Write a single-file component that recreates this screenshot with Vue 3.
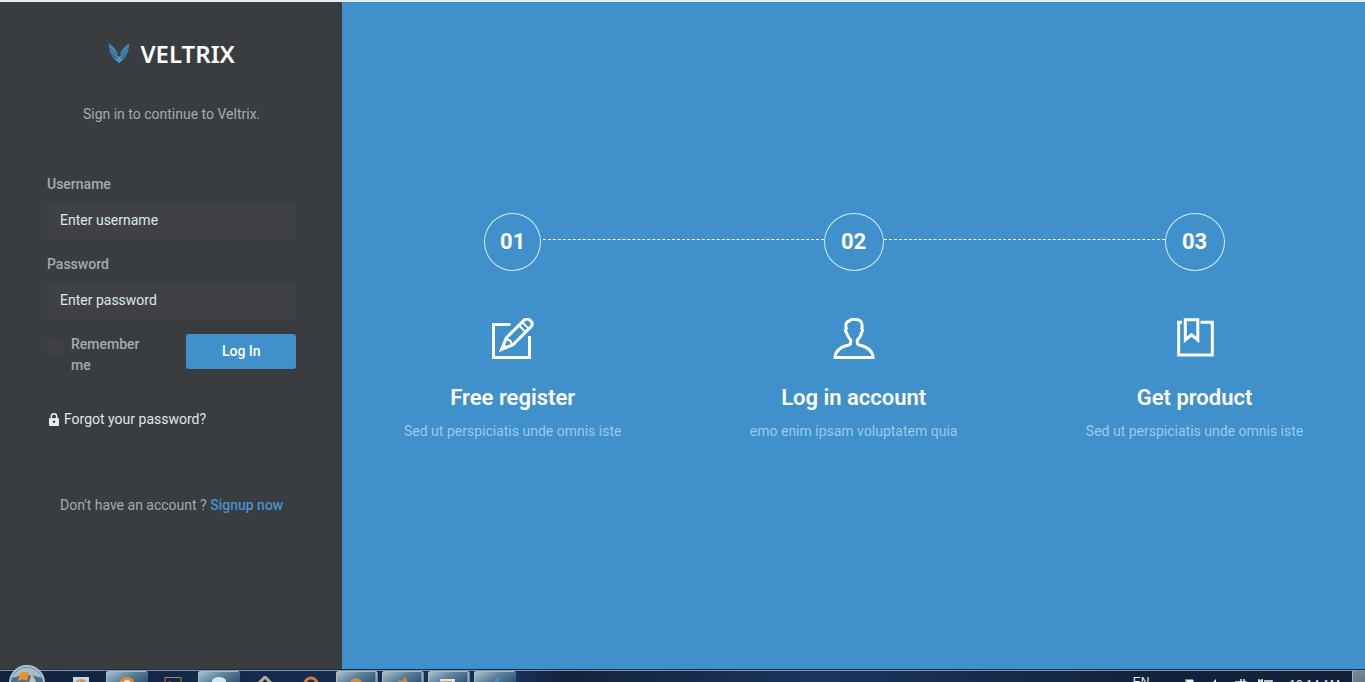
<script setup>
import { ref } from 'vue'

const username = ref('')
const password = ref('')
const remember = ref(false)

const steps = [
  { number: '01', icon: 'pencil', title: 'Free register', text: 'Sed ut perspiciatis unde omnis iste' },
  { number: '02', icon: 'user', title: 'Log in account', text: 'emo enim ipsam voluptatem quia' },
  { number: '03', icon: 'bookmark', title: 'Get product', text: 'Sed ut perspiciatis unde omnis iste' },
]

const tasks = [
  { id: 'media', open: false },
  { id: 'browser', open: true },
  { id: 'editor', open: false },
  { id: 'store', open: true },
  { id: 'tools', open: false },
  { id: 'ring', open: false },
  { id: 'chrome', open: true, stacked: true },
  { id: 'fox', open: true, stacked: true },
  { id: 'folder', open: true, stacked: true },
  { id: 'paint', open: true },
]
</script>

<template>
  <div class="screen">
    <div class="page">
      <aside class="panel">
        <a class="logo" href="#" aria-label="Veltrix">
          <svg width="22" height="22" viewBox="0 0 22 22" aria-hidden="true">
            <path d="M.5 1C5 4 9 8 10 13V20C5 17 1 11 .5 1Z" fill="#3d7fae" />
            <path d="M21.500 1C17 4 13 8 12 13V20C17 17 21 11 21.500 1Z" fill="#3d7fae" />
            <path d="M7.500 17L11 21.500L14.500 17L11 14Z" fill="#4a9bd3" />
            <path d="M1 6L10 14M2.500 10.500L10 17M21 6L12 14M19.500 10.500L12 17" stroke="#3a5263" stroke-width=".8" />
            <path d="M1.500 4L9.500 11.500M2 8.500L9.500 15M20.500 4L12.500 11.500M20 8.500L12.500 15" stroke="#4a9bd3" stroke-width=".8" />
          </svg>
          <span>VELTRIX</span>
        </a>
        <p class="intro">Sign in to continue to Veltrix.</p>

        <form @submit.prevent>
          <div class="field">
            <label for="username">Username</label>
            <input id="username" v-model="username" type="text" placeholder="Enter username" />
          </div>
          <div class="field">
            <label for="password">Password</label>
            <input id="password" v-model="password" type="password" placeholder="Enter password" />
          </div>
          <div class="actions">
            <div class="remember">
              <input id="remember" v-model="remember" type="checkbox" />
              <label for="remember">Remember me</label>
            </div>
            <button class="login" type="submit">Log In</button>
          </div>
          <a class="forgot" href="#">
            <svg width="10" height="13" viewBox="0 0 10 13" aria-hidden="true">
              <path d="M2.300 6V3.500a2.700 2.700 0 0 1 5.400 0V6" fill="none" stroke="#e4eef4" stroke-width="1.500" />
              <rect y="5" width="10" height="8" rx="1" fill="#e4eef4" />
              <circle cx="5" cy="8.800" r="1.200" fill="#3a3d3f" />
            </svg>
            <span>Forgot your password?</span>
          </a>
        </form>

        <p class="signup">Don't have an account ? <a href="#">Signup now</a></p>
      </aside>

      <main class="hero">
        <ol class="steps">
          <li v-for="step in steps" :key="step.number" class="step">
            <span class="number">{{ step.number }}</span>
            <svg class="icon" width="42" height="42" viewBox="0 0 42 42" aria-hidden="true">
              <template v-if="step.icon === 'pencil'">
                <path d="M18.500 6.500H1.500V39.500H37.500V18" />
                <g transform="translate(9.800 31.200) rotate(-45)">
                  <path d="M0 0L11 -4.800H36Q40.500 -4.800 40.500 0T36 4.800H11Z" />
                  <path d="M10.500 -4L12 0L10.500 4M29 -4.800V4.800M33.500 -4.800V4.800" stroke-width="2" />
                  <path d="M0 0L4 -1.500V1.500Z" />
                </g>
              </template>
              <template v-else-if="step.icon === 'user'">
                <path d="M2 39.500H40C39.500 31.500 31.500 28 25.500 26.800Q24.300 26.500 24.300 25V22C26.800 19.500 28.300 17 28.500 14.500Q30.500 12.500 28.800 10.500C30 4.500 27.500 1.500 23 1.500C20 .8 17.500 1.500 16.500 3C12.500 3.500 12.500 7 13.300 10.500Q11.500 12.500 13.500 14.500C14 17 15.500 19.500 17.700 22V25Q17.700 26.500 16.500 26.800C10.500 28 2.500 31.500 2 39.500Z" />
              </template>
              <template v-else>
                <path d="M8 4.300H4.700V37H38.300V4.300H26.500M11.300 1.700H23.800V22L17.500 16.800L11.300 22Z" />
              </template>
            </svg>
            <h2>{{ step.title }}</h2>
            <p>{{ step.text }}</p>
          </li>
        </ol>
      </main>
    </div>

    <footer class="taskbar">
      <button class="start" type="button" aria-label="Start">
        <svg width="36" height="36" viewBox="0 0 36 36" aria-hidden="true">
          <circle cx="18" cy="18" r="17" fill="#4a6f8c" stroke="#a9c3d3" stroke-width="2" />
          <path d="M3 13A16 16 0 0 1 33 13Q18 7 3 13Z" fill="#a8bdca" />
          <path d="M11 8Q16 6 20 8L18 16Q14 13 9 16Z" fill="#ef8e2b" />
          <path d="M22 10Q25 11 27 17L20 18Z" fill="#b9c2b7" />
        </svg>
      </button>
      <div class="tasks">
        <button
          v-for="task in tasks"
          :key="task.id"
          class="task"
          :class="{ open: task.open, stacked: task.stacked }"
          type="button"
          :aria-label="task.id"
        >
          <svg width="20" height="20" viewBox="0 0 20 20" aria-hidden="true">
            <template v-if="task.id === 'media'">
              <rect x="2" y="1" width="16" height="16" fill="#b9dcec" />
              <circle cx="10" cy="9" r="6" fill="#e98c32" />
              <path d="M8 5L13 9L8 13Z" fill="#fff" />
            </template>
            <template v-else-if="task.id === 'browser'">
              <circle cx="10" cy="9" r="8" fill="#e48a32" />
              <path d="M6 9a4 4 0 0 1 8 0H7" fill="none" stroke="#fff" stroke-width="1.500" />
            </template>
            <template v-else-if="task.id === 'editor'">
              <path d="M2 1.500H18V18H2ZM5 6V12M5 6H8V9H5" fill="none" stroke="#b98240" />
            </template>
            <template v-else-if="task.id === 'store'">
              <ellipse cx="10" cy="5" rx="7" ry="4" fill="#d7e8ee" />
              <rect x="4" y="6" width="12" height="12" fill="#89adc2" />
            </template>
            <template v-else-if="task.id === 'tools'">
              <path d="M3 8L10 1L17 8" fill="none" stroke="#b8aa94" stroke-width="3" />
              <path d="M7 6L12 10" stroke="#d27c34" stroke-width="2" />
            </template>
            <template v-else-if="task.id === 'ring'">
              <circle cx="10" cy="8" r="6" fill="none" stroke="#d9792a" stroke-width="3" />
            </template>
            <template v-else-if="task.id === 'chrome'">
              <circle cx="10" cy="8" r="6" fill="#dd8a3b" />
              <circle cx="10" cy="8" r="2" fill="#eadfc9" />
            </template>
            <template v-else-if="task.id === 'fox'">
              <path d="M2 8L8 4L10 5L13 1L17 8L10 17Z" fill="#d98439" />
            </template>
            <template v-else-if="task.id === 'folder'">
              <path d="M2 3H17L16 15H4Z" fill="#ede6da" />
              <path d="M3 5H14V8H4Z" fill="#dc9851" />
            </template>
            <template v-else>
              <path d="M2 12Q4 5 9 7L13 1L15 3L12 8L18 5V17H2Z" fill="#3b93d2" />
            </template>
          </svg>
        </button>
      </div>
      <div class="tray">
        <span class="lang">EN</span>
        <svg width="90" height="12" viewBox="0 0 90 12" aria-hidden="true">
          <path d="M1 1V12M2 2H8V6H11V10H2Z" fill="#eef3f6" stroke="#eef3f6" />
          <path d="M26 6L31 1V12Z" fill="#eef3f6" />
          <path d="M50 4H61V12M52 4V12M56 1V9M59 1V9M54 6H64" fill="none" stroke="#eef3f6" stroke-width="1.500" />
          <path d="M74 1V8M77 1V8M73 3H78M79 3H87V12M79 6V12" fill="none" stroke="#eef3f6" stroke-width="1.500" />
        </svg>
        <time class="clock">12:14 AM</time>
        <button class="desktop" type="button" aria-label="Show desktop"></button>
      </div>
    </footer>
  </div>
</template>

<style>
body {
  margin: 0;
  overflow: hidden;
}
</style>

<style scoped>
.screen {
  display: flex;
  flex-direction: column;
  height: 100vh;
  box-sizing: border-box;
  border-top: 2px solid #e3edf3;
  font-family: Roboto, "Liberation Sans", sans-serif;
  font-size: 14px;
  line-height: 21px;
  color: #a5abae;
  overflow: hidden;
}
p,
h2,
ol {
  margin: 0;
  padding: 0;
}
a {
  text-decoration: none;
}
button {
  border: 0;
  padding: 0;
  font: inherit;
  cursor: pointer;
}
.page {
  display: flex;
  flex: 1;
  min-height: 0;
}
.panel {
  flex: 0 0 calc(25% + 1px);
  box-sizing: border-box;
  padding: 34px 46px 0 47px;
  background: #3a3d3f;
}
.logo {
  display: flex;
  align-items: center;
  justify-content: center;
  gap: 10px;
  height: 34px;
  color: #fff;
  font-family: "Noto Sans", "Open Sans", sans-serif;
  font-size: 24px;
  font-weight: 600;
}
.intro {
  margin: 34px 0 49px;
  text-align: center;
}
.field {
  margin-bottom: 14px;
}
.field label {
  display: block;
  margin-bottom: 8px;
  font-weight: 500;
}
.field input {
  display: block;
  box-sizing: border-box;
  width: 100%;
  height: 37px;
  padding: 0 13px 4px;
  border: 0;
  border-radius: 4px;
  background: #404144;
  color: #dce8ee;
  font: inherit;
}
.field input::placeholder {
  color: #dce8ee;
  opacity: 1;
}
.actions {
  display: flex;
  justify-content: space-between;
  align-items: flex-start;
}
.remember {
  display: flex;
  gap: 8px;
  width: 110px;
  font-weight: 500;
}
.remember input {
  appearance: none;
  flex: none;
  width: 16px;
  height: 16px;
  margin: 5px 0 0;
  border-radius: 4px;
  background: #404144;
}
.remember input:checked {
  background: #4090cb;
}
.login {
  width: 110px;
  height: 35px;
  border-radius: 3px;
  background: #4090cb;
  color: #fff;
  font-weight: 500;
}
.forgot {
  display: flex;
  align-items: center;
  gap: 5px;
  margin: 33px 0 0 2px;
  color: #dce8ee;
}
.signup {
  margin-top: 65px;
  text-align: center;
}
.signup a {
  color: #4394cf;
  font-weight: 500;
}
.hero {
  display: flex;
  flex: 1;
  align-items: center;
  background: #4090cb;
}
.steps {
  display: grid;
  grid-template-columns: repeat(3, 1fr);
  width: 100%;
  padding-bottom: 18px;
  list-style: none;
}
.step {
  position: relative;
  display: flex;
  flex-direction: column;
  align-items: center;
  color: #9acbe9;
}
.step:not(:last-child)::after {
  content: "";
  position: absolute;
  top: 26px;
  left: calc(50% + 30px);
  width: calc(100% - 60px);
  border-top: 1px dashed #fff;
}
.number {
  box-sizing: border-box;
  width: 60px;
  height: 58px;
  border: 1px solid #d3ebf8;
  border-radius: 50%;
  color: #fff;
  font-size: 22px;
  font-weight: 700;
  line-height: 56px;
  text-align: center;
}
.step:first-child .number {
  width: 57px;
}
.icon {
  margin-top: 47px;
  fill: none;
  stroke: #fff;
  stroke-width: 3;
}
.step h2 {
  margin: 24px 0 9px;
  color: #fff;
  font-size: 22px;
  font-weight: 600;
  line-height: 28px;
}
.taskbar {
  position: relative;
  display: flex;
  flex: none;
  justify-content: space-between;
  height: 12px;
  box-sizing: border-box;
  border-top: 1px solid #8195aa;
  background: linear-gradient(90deg, #13233f, #17305a 38%, #13233b 41%, #1b355d 60%, #12223a 85%);
  box-shadow: 0 -1px #19304a;
}
.start {
  position: absolute;
  top: -6px;
  left: 9px;
  width: 36px;
  height: 36px;
  background: none;
}
.tasks {
  display: flex;
  padding-left: 58px;
}
.task {
  display: flex;
  flex: none;
  align-items: flex-start;
  justify-content: center;
  width: 42px;
  height: 40px;
  margin: 0 2px;
  padding-top: 5px;
  border-radius: 3px;
  background: none;
}
.task.open {
  background: linear-gradient(150deg, #b4c8d4, #5d829c 28%, #274b6c 60%);
  box-shadow: inset 1px 1px #a8bdca;
}
.task.stacked {
  border-right: 3px double #6e8ca3;
}
.tray {
  display: flex;
  align-items: flex-start;
  color: #eef3f6;
  font-family: "Liberation Sans", sans-serif;
  font-size: 12px;
  line-height: 14px;
}
.lang {
  margin: 4px 36px 0 0;
}
.tray svg {
  margin-top: 7px;
}
.clock {
  margin: 7px 12px 0 14px;
}
.desktop {
  width: 13px;
  height: 40px;
  border-left: 1px solid #a3b0bb;
  background: linear-gradient(150deg, #7c8c99, #3d4e60);
}
</style>
